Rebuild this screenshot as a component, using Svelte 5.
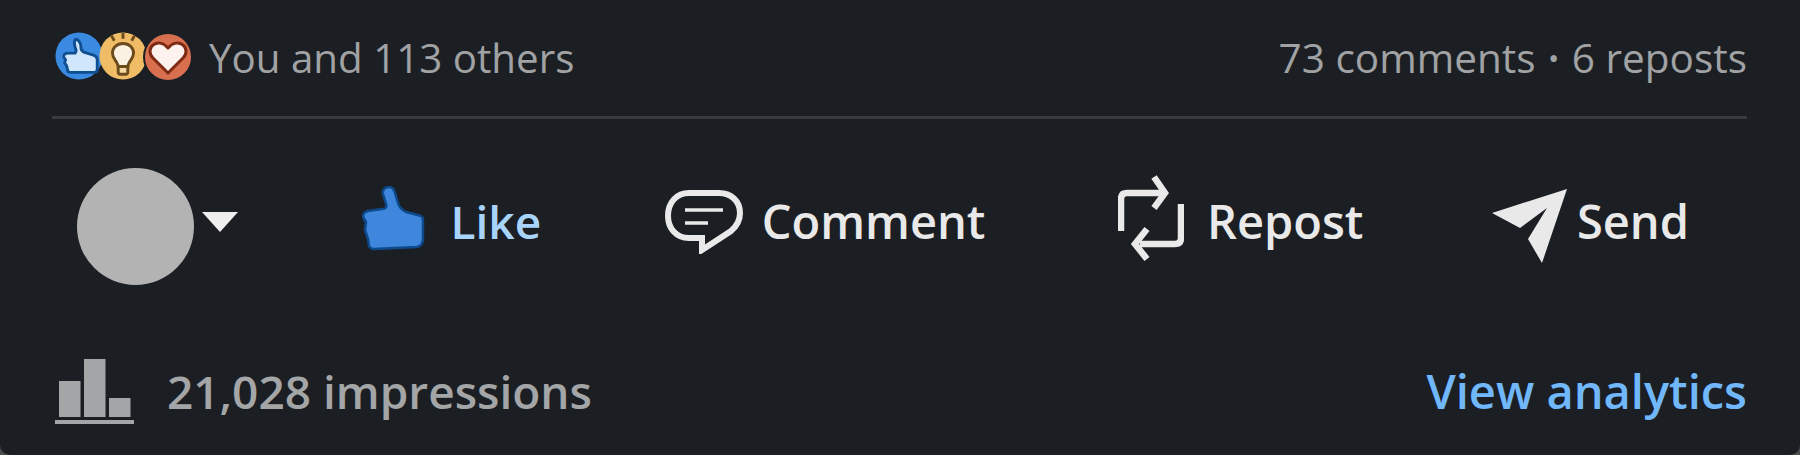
<script>
    const bars = [
        { x: 4, y: 22, h: 36 },
        { x: 29, y: 0, h: 58 },
        { x: 54, y: 39, h: 19 }
    ];
</script>

<main class="card">
    <div class="social">
        <div class="reactions">
            <svg class="reaction" viewBox="0 0 50 50">
                <circle cx="25" cy="25" r="24.5" fill="#3b8ae2" />
                <path d="M21 8c3-1 6 3 6 8 0 2 1 4 3 5l10 3c3 1 4 2 4 5v10c0 2-1 3-3 3H16c-2 0-3-1-3-3l-1-4-2-3 1-3-2-3c0-3 2-4 5-4h7c1-1 1-2 1-3-1-3-3-7-1-11z" fill="#cfe6fc" stroke="#0f4f91" stroke-width="3" stroke-linejoin="round" />
            </svg>
            <svg class="reaction" viewBox="0 0 50 50">
                <circle cx="25" cy="25" r="24.5" fill="#f0bc66" />
                <path d="M25 12c-7 0-11 5-11 10 0 4 2 6 4 9 1 2 2 3 2 5h10c0-2 1-3 2-5 2-3 4-5 4-9 0-5-4-10-11-10z" fill="#fbf1e2" stroke="#6b4a1c" stroke-width="3" />
                <path d="M20 36h10v6c0 1-1 2-2 2h-6c-1 0-2-1-2-2z" fill="#f6d9a2" stroke="#6b4a1c" stroke-width="3" />
                <path d="M25 1v6M13 4l3 5M37 4l-3 5" stroke="#6b4a1c" stroke-width="3" fill="none" />
            </svg>
            <svg class="reaction heart" viewBox="0 0 50 50">
                <circle cx="25" cy="25" r="24" fill="#d8704f" stroke="#1b1f23" stroke-width="2" />
                <path d="M25 41L10 26c-4-4-4-10 0-13 4-3 10-3 15 3 5-6 11-6 15-3 4 3 4 9 0 13z" fill="#fdf2ee" stroke="#7e2a14" stroke-width="3" stroke-linejoin="round" />
            </svg>
        </div>
        <span class="count">You and 113 others</span>
        <span class="meta">73 comments <span class="dot">•</span> 6 reposts</span>
    </div>

    <div class="actions">
        <div class="who">
            <div class="avatar"></div>
            <svg class="caret" viewBox="0 0 36 20"><path d="M0 0h36L18 20z" fill="#eee" /></svg>
        </div>
        <button class="act liked">
            <svg class="ic-like" viewBox="0 0 64 66">
                <path d="M27 1c3 0 5 2 6 6l3 10c1 4 4 7 8 9l8 2 7 2c2 1 2 3 2 5v18c0 4-2 7-6 8L12 63c-3 0-4-1-5-3l-1-7-3-9 1-8-3-5c0-4 2-5 5-6l14-2c4 0 5-2 4-5l-3-10c-1-4 2-7 6-7z" fill="#3f86dd" stroke="#0d4a8c" stroke-width="2.5" stroke-linejoin="round" />
            </svg>
            Like
        </button>
        <button class="act comment">
            <svg class="ic-comment" viewBox="0 0 78 64">
                <path d="M24 3h30c12 0 21 8 21 20 0 8-3 13-9 18L37 60V48H24C11 48 3 38 3 26 3 12 12 3 24 3z" fill="none" stroke="#e9e9e9" stroke-width="6" />
                <path d="M20 20h38M20 33h23" stroke="#e9e9e9" stroke-width="3.5" fill="none" />
            </svg>
            Comment
        </button>
        <button class="act repost">
            <svg class="ic-repost" viewBox="0 0 66 86">
                <path d="M3 56V24c0-4 2-6 6-6h34" fill="none" stroke="#e9e9e9" stroke-width="6.5" />
                <path d="M36 2l11 16-11 15" fill="none" stroke="#e9e9e9" stroke-width="6.5" />
                <path d="M63 29v34c0 4-2 6-6 6H22" fill="none" stroke="#e9e9e9" stroke-width="6.5" />
                <path d="M29 54L17 69l12 15" fill="none" stroke="#e9e9e9" stroke-width="6.5" />
            </svg>
            Repost
        </button>
        <button class="act send">
            <svg class="ic-send" viewBox="0 0 75 75">
                <path d="M75 0L0 24l28 15 27-20-19 31 14 24z" fill="#e9e9e9" />
            </svg>
            Send
        </button>
    </div>

    <div class="stats">
        <svg class="ic-bars" viewBox="0 0 80 65">
            {#each bars as b}
                <rect x={b.x} y={b.y} width="21.5" height={b.h} fill="#a3a5a7" />
            {/each}
            <rect x="0" y="61" width="79" height="4" fill="#a3a5a7" />
        </svg>
        <span class="impressions">21,028 impressions</span>
        <a class="analytics" href="#analytics">View analytics</a>
    </div>
</main>

<style>
    :global(body) {
        background-color: #4a4c4e;
    }
    .card {
        width: 1800px;
        height: 455px;
        box-sizing: border-box;
        padding: 0 53px 0 52px;
        border-radius: 0 0 10px 10px;
        background-color: #1b1f23;
        font-family: "Open Sans", "Noto Sans", sans-serif;
        display: flex;
        flex-direction: column;
    }
    .social {
        height: 119px;
        box-sizing: border-box;
        padding: 0 0 2px 3px;
        display: flex;
        align-items: center;
        border-bottom: 3px solid #373b3f;
        font-size: 40.5px;
        color: #a0a2a4;
    }
    .reactions {
        display: flex;
        margin-right: 16px;
    }
    .reaction {
        width: 48px;
        height: 48px;
        margin-right: -4px;
    }
    .heart {
        width: 50px;
        height: 50px;
        margin-right: 0;
    }
    .count {
        font-size: 40.3px;
    }
    .meta {
        margin-left: auto;
    }
    .dot {
        font-size: 30px;
        margin: 0 2px;
        vertical-align: 4px;
    }
    .actions {
        flex: none;
        display: flex;
        align-items: center;
        justify-content: space-between;
        margin-top: 49px;
        height: 117px;
        padding: 0 58px 0 25px;
    }
    .who {
        display: flex;
        align-items: center;
    }
    .avatar {
        width: 117px;
        height: 117px;
        border-radius: 50%;
        background-color: #b3b3b3;
    }
    .caret {
        width: 36px;
        height: 20px;
        margin-left: 8px;
        margin-bottom: 10px;
    }
    .act {
        display: flex;
        align-items: center;
        border: 0;
        padding: 0 0 12px;
        background: none;
        font: inherit;
        font-size: 47px;
        font-weight: 600;
        line-height: 60px;
        color: #e9e9e9;
    }
    .liked {
        gap: 25px;
        font-size: 46px;
        color: #a8d4fb;
    }
    .comment {
        gap: 19px;
        margin-right: 9px;
    }
    .repost {
        gap: 23px;
        margin-right: 5px;
    }
    .send {
        gap: 10px;
    }
    .ic-like {
        width: 64px;
        height: 66px;
        margin-bottom: 4px;
    }
    .ic-comment {
        width: 78px;
        height: 64px;
        margin-top: 2px;
    }
    .ic-repost {
        width: 66px;
        height: 86px;
        margin-bottom: 6px;
    }
    .ic-send {
        width: 75px;
        height: 75px;
        margin-top: 11px;
    }
    .stats {
        margin-top: 74px;
        padding-left: 3px;
        display: flex;
        align-items: center;
        font-size: 46px;
        font-weight: 600;
        line-height: 65px;
    }
    .ic-bars {
        width: 80px;
        height: 65px;
        margin-right: 32px;
    }
    .impressions {
        color: #a3a5a7;
    }
    .analytics {
        margin-left: auto;
        font-size: 47px;
        color: #71b7fb;
        text-decoration: none;
    }
</style>
